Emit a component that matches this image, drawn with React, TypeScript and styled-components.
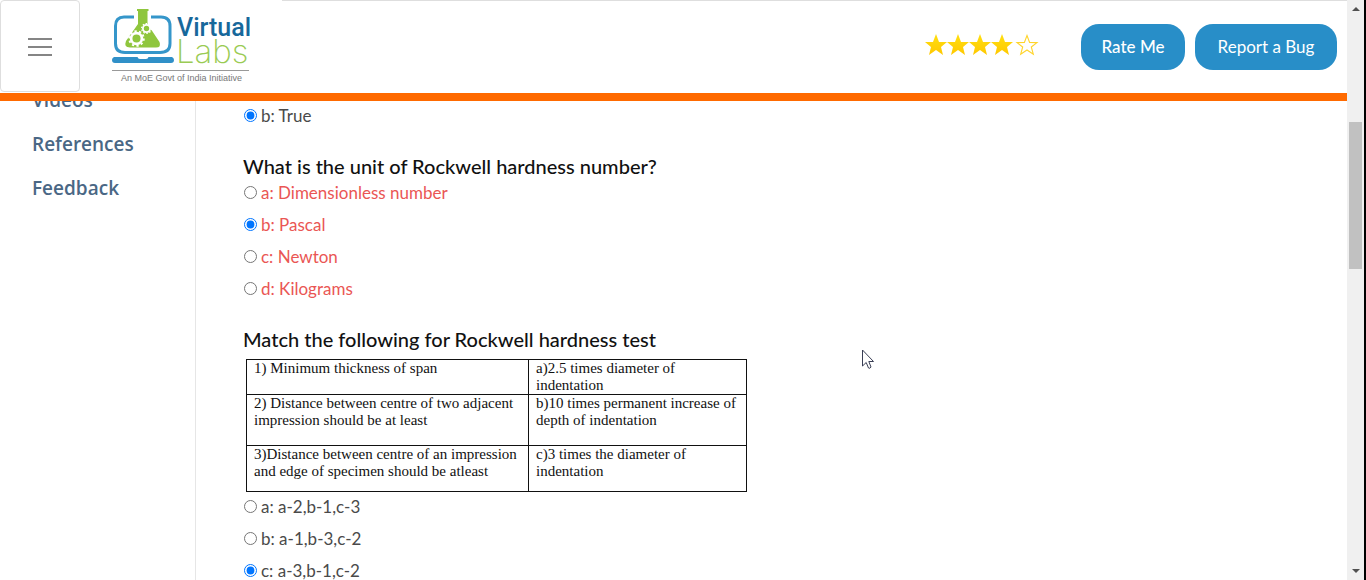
import React from "react";
import styled, { createGlobalStyle } from "styled-components";

const bodyFont = 'Lato, "Open Sans", sans-serif';

const GlobalStyle = createGlobalStyle`
  *, *::before, *::after { box-sizing: border-box; }
  body { margin: 0; background: #fff; font-family: ${bodyFont}; }
`;

const Screen = styled.div`
  display: flex;
  height: 100vh;
  overflow: hidden;
`;

const Page = styled.div`
  flex: 1;
  min-width: 0;
  display: flex;
  flex-direction: column;
`;

const Header = styled.header`
  position: relative;
  z-index: 1;
  flex: none;
  display: flex;
  align-items: center;
  height: 101px;
  background: #fff;
  border-bottom: 8px solid #ff6a00;
`;

const MenuButton = styled.button`
  display: flex;
  align-items: center;
  justify-content: center;
  align-self: flex-start;
  width: 80px;
  height: 92px;
  padding: 2px 0 0;
  background: #fff;
  border: 1px solid #dedede;
  border-radius: 4px;
`;

const LogoLink = styled.a`
  align-self: flex-start;
  display: block;
  width: 202px;
  height: 92px;
  padding-left: 30px;
`;

const HeaderTools = styled.div`
  flex: 1;
  align-self: stretch;
  display: flex;
  align-items: center;
  justify-content: flex-end;
  gap: 10px;
  padding-right: 10px;
  border-top: 1px solid #dedede;
`;

const Stars = styled.div`
  display: flex;
  margin-right: 32px;
  padding-bottom: 4px;
`;

const PillButton = styled.button<{ $width: number; $weight?: number }>`
  width: ${(p) => p.$width}px;
  height: 46px;
  padding: 0 0 2px;
  border: 0;
  border-radius: 18px;
  background: #288ec8;
  color: #fff;
  font-family: ${bodyFont};
  font-size: 17px;
  font-weight: ${(p) => p.$weight ?? 400};
`;

const Body = styled.div`
  flex: 1;
  min-height: 0;
  display: flex;
`;

const Sidebar = styled.nav`
  flex: none;
  display: flex;
  flex-direction: column;
  gap: 16px;
  width: 196px;
  margin-top: -15px;
  padding-left: 32px;
  border-right: 1px solid #e6e6e6;
`;

const SideLink = styled.a`
  color: #4a6785;
  font-family: "Open Sans", sans-serif;
  font-size: 19px;
  font-weight: 600;
  line-height: 28px;
  text-decoration: none;
`;

const Content = styled.main`
  flex: 1;
  min-width: 0;
  display: flex;
  flex-direction: column;
  gap: 25px;
  padding: 3px 48px 0 47px;
`;

const Question = styled.fieldset`
  min-width: 0;
  margin: 0;
  padding: 0;
  border: 0;
`;

const Prompt = styled.legend`
  padding: 0 0 2px;
  color: #111;
  font-size: 20px;
  font-weight: 500;
  line-height: 26px;
`;

const Options = styled.div`
  display: flex;
  flex-direction: column;
  gap: 8px;
`;

const Option = styled.label<{ $wrong?: boolean }>`
  display: flex;
  align-items: center;
  gap: 4px;
  color: ${(p) => (p.$wrong ? "#ea5654" : "#4a4a4a")};
  font-size: 17px;
  line-height: 24px;
`;

const Radio = styled.input`
  flex: none;
  width: 13px;
  height: 13px;
  margin: 0 0 2px 1px;
`;

const MatchTable = styled.table`
  width: 501px;
  margin: 5px 0 3px 3px;
  border-collapse: collapse;
  table-layout: fixed;
  color: #111;
  font-family: "Liberation Serif", serif;
  font-size: 15px;
  line-height: 17px;
`;

const MatchRow = styled.tr<{ $height: number }>`
  height: ${(p) => p.$height}px;
`;

const MatchCell = styled.td`
  padding: 0 4px 0 7px;
  border: 1px solid #111;
  vertical-align: top;
`;

const ScrollBar = styled.div`
  flex: none;
  display: flex;
  flex-direction: column;
  align-items: center;
  justify-content: space-between;
  width: 19px;
  padding: 6px 0;
  background: #f0f0f0;
  border-right: 2px solid #000;
`;

const ScrollTrack = styled.div`
  flex: 1;
  padding-top: 111px;
`;

const ScrollThumb = styled.div`
  width: 13px;
  height: 147px;
  background: #c1c1c1;
`;

const Pointer = styled.svg`
  position: absolute;
  left: 862px;
  top: 349px;
  z-index: 2;
`;

const starPath = "M11 0 L14 8 L22 8 L16 13 L18 21 L11 16 L4 21 L6 13 L0 8 L8 8 Z";

function Star({ filled }: { filled: boolean }) {
  return (
    <svg width={filled ? 22 : 26} height="22" viewBox={filled ? "0 0 22 22" : "-3 0 26 22"} aria-hidden="true">
      <defs>
        <linearGradient id="gold" x1="0" y1="0" x2="0" y2="1">
          <stop offset="0" stopColor="#ffdf10" />
          <stop offset="1" stopColor="#ffc800" />
        </linearGradient>
      </defs>
      {filled ? (
        <path d={starPath} fill="url(#gold)" />
      ) : (
        <path d="M11 1.5 L13.6 8.4 L21 8.6 L15.3 13 L17.3 20.2 L11 16 L4.7 20.2 L6.7 13 L1 8.6 L8.4 8.4 Z" fill="#fff" stroke="#ffd42a" strokeWidth="1.1" />
      )}
    </svg>
  );
}

function Gear({ x, y, r }: { x: number; y: number; r: number }) {
  return (
    <g transform={`translate(${x} ${y})`} fill="none" stroke="#fff">
      <circle r={r} strokeWidth={r * 0.5} />
      <circle r={r * 1.36} strokeWidth={r * 0.34} strokeDasharray={`${r * 0.427} ${r * 0.427}`} />
    </g>
  );
}

function Logo() {
  return (
    <svg width="140" height="92" viewBox="110 0 140 92" role="img" aria-label="Virtual Labs">
      <path d="M134 17H124Q115.500 17 115.500 26V43.500Q115.500 52.500 125 52.500H160Q170 52.500 170 43.500V26Q170 17 161 17H151" fill="none" stroke="#3596ca" strokeWidth="3" />
      <path d="M137 9H148.500V11H147.500V24L159.500 42Q161.500 47.500 156 47.500H130Q123.500 47.500 126 41L138 24V11H137Z" fill="#8fc63d" />
      <Gear x={136.500} y={38.500} r={5.400} />
      <Gear x={146.500} y={28.500} r={3.600} />
      <path d="M114 57H137.500Q138 59 140 59H146Q148 59 148.500 57H172Q174 58 174 60Q174 63 171 63H115Q112 63 112 60Q112 58 114 57Z" fill="#3090c8" />
      <text x="177" y="36" fill="#17689b" fontFamily="Roboto, sans-serif" fontSize="25" fontWeight="500">Virtual</text>
      <text x="176" y="63" fill="#9acb54" fontFamily="Inter, sans-serif" fontSize="33" fontWeight="200">Labs</text>
      <path d="M112 70.500H249" stroke="#999" />
      <text x="121" y="81" fill="#777" fontFamily="Liberation Sans, sans-serif" fontSize="9">An MoE Govt of India Initiative</text>
    </svg>
  );
}

type Choice = { text: string; checked?: boolean };

function Choices({ name, items, wrong }: { name: string; items: Choice[]; wrong?: boolean }) {
  return (
    <Options>
      {items.map((item) => (
        <Option key={item.text} $wrong={wrong}>
          <Radio type="radio" name={name} defaultChecked={item.checked} />
          {item.text}
        </Option>
      ))}
    </Options>
  );
}

const unitChoices: Choice[] = [
  { text: "a: Dimensionless number" },
  { text: "b: Pascal", checked: true },
  { text: "c: Newton" },
  { text: "d: Kilograms" },
];

const matchChoices: Choice[] = [
  { text: "a: a-2,b-1,c-3" },
  { text: "b: a-1,b-3,c-2" },
  { text: "c: a-3,b-1,c-2", checked: true },
];

const matchRows = [
  { height: 34, left: ["1) Minimum thickness of span"], right: ["a)2.5 times diameter of", "indentation"] },
  { height: 51, left: ["2) Distance between centre of two adjacent", "impression should be at least"], right: ["b)10 times permanent increase of", "depth of indentation"] },
  { height: 46, left: ["3)Distance between centre of an impression", "and edge of specimen should be atleast"], right: ["c)3 times the diameter of", "indentation"] },
];

function Lines({ lines }: { lines: string[] }) {
  return (
    <>
      {lines.map((line, i) => (
        <React.Fragment key={line}>
          {i > 0 && <br />}
          {line}
        </React.Fragment>
      ))}
    </>
  );
}

export default function App() {
  return (
    <Screen>
      <GlobalStyle />
      <Page>
        <Header>
          <MenuButton aria-label="Menu">
            <svg width="24" height="20" viewBox="0 0 24 20" aria-hidden="true">
              <path d="M0 2H24M0 10H24M0 18H24" stroke="#858585" strokeWidth="2" />
            </svg>
          </MenuButton>
          <LogoLink href="#">
            <Logo />
          </LogoLink>
          <HeaderTools>
            <Stars role="img" aria-label="4 out of 5 stars">
              {[1, 2, 3, 4, 5].map((n) => (
                <Star key={n} filled={n < 5} />
              ))}
            </Stars>
            <PillButton $width={104} $weight={500}>Rate Me</PillButton>
            <PillButton $width={142}>Report a Bug</PillButton>
          </HeaderTools>
        </Header>
        <Body>
          <Sidebar>
            <SideLink href="#">Videos</SideLink>
            <SideLink href="#">References</SideLink>
            <SideLink href="#">Feedback</SideLink>
          </Sidebar>
          <Content>
            <Choices name="previous" items={[{ text: "b: True", checked: true }]} />
            <Question>
              <Prompt>What is the unit of Rockwell hardness number?</Prompt>
              <Choices name="unit" items={unitChoices} wrong />
            </Question>
            <Question>
              <Prompt>Match the following for Rockwell hardness test</Prompt>
              <MatchTable>
                <colgroup>
                  <col width="282" />
                  <col />
                </colgroup>
                <tbody>
                  {matchRows.map((row) => (
                    <MatchRow key={row.height} $height={row.height}>
                      <MatchCell><Lines lines={row.left} /></MatchCell>
                      <MatchCell><Lines lines={row.right} /></MatchCell>
                    </MatchRow>
                  ))}
                </tbody>
              </MatchTable>
              <Choices name="match" items={matchChoices} />
            </Question>
          </Content>
        </Body>
      </Page>
      <ScrollBar aria-hidden="true">
        <svg width="8" height="5" viewBox="0 0 8 5"><path d="M0 5L4 1L8 5Z" fill="#505050" /></svg>
        <ScrollTrack><ScrollThumb /></ScrollTrack>
        <svg width="8" height="5" viewBox="0 0 8 5"><path d="M0 0L4 4L8 0Z" fill="#505050" /></svg>
      </ScrollBar>
      <Pointer width="13" height="21" viewBox="0 0 13 21" aria-hidden="true">
        <path d="M0.500 1V17L4.200 13.500L6.500 19Q8 20 9 18L6.800 12.500H11.500Z" fill="#fff" stroke="#3a3f55" strokeWidth="1" />
      </Pointer>
    </Screen>
  );
}
